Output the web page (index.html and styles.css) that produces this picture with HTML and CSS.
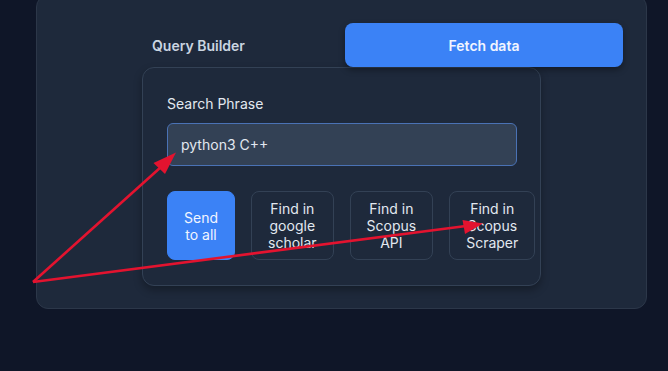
FILE: index.html
```html
<!DOCTYPE html>
<html lang="en">
<head>
    <meta charset="UTF-8">
    <meta name="viewport" content="width=device-width, initial-scale=1.0">
    <title>Query Builder</title>
    <link rel="stylesheet" href="styles.css">
</head>
<body>
    <div class="panel">
        <div class="panel-head">
            <h2 class="title">Query Builder</h2>
            <button class="fetch">Fetch data</button>
        </div>

        <div class="builder">
            <label class="label" for="phrase">Search Phrase</label>
            <input class="phrase" id="phrase" type="text" value="python3 C++">

            <div class="actions">
                <button class="action primary">Send to all</button>
                <button class="action">Find in google scholar</button>
                <button class="action">Find in Scopus API</button>
                <button class="action">Find in Scopus Scraper</button>
            </div>
        </div>
    </div>

    <!-- annotation arrows drawn over the screenshot -->
    <svg class="marks" width="668" height="371" viewBox="0 0 668 371">
        <line x1="33" y1="282" x2="161" y2="167" />
        <polygon points="176,152.5 153.5,163 165,174" />
        <line x1="33" y1="282" x2="466" y2="226" />
        <polygon points="483,223.5 462.5,220 465,234" />
    </svg>
</body>
</html>
```

FILE: styles.css
```css
* {
    box-sizing: border-box;
}

body {
    margin: 0;
    height: 371px;
    overflow: hidden;
    position: relative;
    background-color: #0f1628;
    font-family: Inter, "Noto Sans", sans-serif;
    color: #e2e8f0;
}

.panel {
    width: 611px;
    height: 314px;
    margin: -5px 0 0 36px;
    padding: 27px 23px 0 105px;
    background-color: #1e293b;
    border: 1px solid #2c3749;
    border-radius: 12px;
}

.panel-head {
    display: flex;
    align-items: center;
    height: 44px;
}

.title {
    flex: 1;
    margin: 0;
    padding-left: 10px;
    font-size: 14px;
    font-weight: 600;
    color: #cbd5e1;
}

.fetch {
    width: 278px;
    height: 44px;
    border: none;
    border-radius: 8px;
    background-color: #3b82f6;
    color: #f1f5ff;
    font-family: inherit;
    font-size: 14px;
    font-weight: 600;
    box-shadow: 0 3px 6px rgba(0, 0, 0, .35);
}

.builder {
    display: flex;
    flex-direction: column;
    width: 399px;
    padding: 26px 24px 25px;
    background-color: #1e293b;
    border: 1px solid #334155;
    border-radius: 12px;
    box-shadow: 0 4px 8px rgba(0, 0, 0, .3);
}

.label {
    font-size: 14px;
    line-height: 20px;
    color: #e2e8f0;
}

.phrase {
    width: 350px;
    height: 43px;
    margin-top: 9px;
    padding: 0 13px;
    background-color: #334155;
    border: 1px solid #4a72b5;
    border-radius: 6px;
    color: #e2e8f0;
    font-family: inherit;
    font-size: 14px;
    outline: none;
}

.actions {
    display: flex;
    gap: 16px;
    margin-top: 25px;
}

.action {
    flex-shrink: 0;
    width: min-content;
    height: 69px;
    padding: 0 16px;
    background-color: transparent;
    border: 1px solid #334155;
    border-radius: 8px;
    color: #e2e8f0;
    font-family: inherit;
    font-size: 14px;
    line-height: 17px;
}

.action.primary {
    background-color: #3b82f6;
    border-color: #3b82f6;
    color: #f1f5ff;
}

.marks {
    position: absolute;
    top: 0;
    left: 0;
    pointer-events: none;
}

.marks line {
    stroke: #e3132f;
    stroke-width: 2.6;
}

.marks polygon {
    fill: #e3132f;
}
```
